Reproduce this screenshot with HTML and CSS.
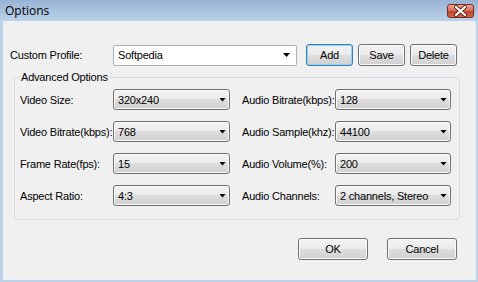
FILE: index.html
```html
<!DOCTYPE html>
<html lang="en">
<head>
  <meta charset="UTF-8">
  <title>Options</title>
  <link rel="stylesheet" href="styles.css">
</head>
<body>
  <div class="window">
    <div class="titlebar">
      <span class="title">Options</span>
      <span class="close">
        <svg width="25" height="12" viewBox="0 0 25 12">
          <path d="M8 2 L17 10 M17 2 L8 10" stroke="#6b2418" stroke-width="4" stroke-linecap="round"/>
          <path d="M8 2 L17 10 M17 2 L8 10" stroke="#fff" stroke-width="2.2" stroke-linecap="round"/>
        </svg>
      </span>
    </div>
    <div class="client">
      <div class="profile-row">
        <span class="profile-label">Custom Profile:</span>
        <div class="edit-combo"><span>Softpedia</span></div>
        <button class="btn btn-default">Add</button>
        <button class="btn">Save</button>
        <button class="btn">Delete</button>
      </div>
      <fieldset class="group">
        <legend>Advanced Options</legend>
        <div class="grid">
          <span>Video Size:</span>
          <div class="combo">320x240</div>
          <span class="label-right">Audio Bitrate(kbps):</span>
          <div class="combo">128</div>

          <span>Video Bitrate(kbps):</span>
          <div class="combo">768</div>
          <span class="label-right">Audio Sample(khz):</span>
          <div class="combo">44100</div>

          <span>Frame Rate(fps):</span>
          <div class="combo">15</div>
          <span class="label-right">Audio Volume(%):</span>
          <div class="combo">200</div>

          <span>Aspect Ratio:</span>
          <div class="combo">4:3</div>
          <span class="label-right">Audio Channels:</span>
          <div class="combo">2 channels, Stereo</div>
        </div>
      </fieldset>
      <div class="actions">
        <button class="btn btn-wide">OK</button>
        <button class="btn btn-wide">Cancel</button>
      </div>
    </div>
  </div>
</body>
</html>
```

FILE: styles.css
```css
* {
  box-sizing: border-box;
}
body {
  margin: 0;
  font-family: "Liberation Sans", Arial, sans-serif;
  font-size: 11px;
  letter-spacing: -0.2px;
  color: #000;
}
.window {
  width: 478px;
  height: 282px;
  background: #f0f0f0;
}
.titlebar {
  height: 21px;
  display: flex;
  align-items: center;
  justify-content: space-between;
  padding: 0 4px 0 5px;
  background: linear-gradient(#98b3d3, #bbd2ea);
}
.title {
  font-family: "Open Sans", sans-serif;
  font-size: 12px;
  letter-spacing: 0;
}
.close {
  width: 27px;
  height: 14px;
  display: flex;
  align-items: center;
  justify-content: center;
  border: 1px solid #7e2a1e;
  border-radius: 3px;
  background: linear-gradient(#e9a897, #d37361 45%, #c0432d 55%, #cf6a50);
}
.client {
  height: 261px;
  border: solid #bbd2ea;
  border-width: 0 2px 2px 3px;
  padding: 23px 0 0 7px;
}
.profile-row {
  display: flex;
  align-items: center;
  height: 22px;
}
.profile-label {
  width: 103px;
}
.edit-combo {
  width: 184px;
  height: 21px;
  display: flex;
  align-items: center;
  padding: 0 6px 0 4px;
  background: #fff;
  border: 1px solid #a9afb8;
  border-radius: 2px;
}
.edit-combo::after,
.combo::after {
  content: "";
  width: 7px;
  height: 4px;
  margin-left: auto;
  background: #000;
  clip-path: polygon(0 0, 100% 0, 50% 100%);
}
.btn {
  width: 47px;
  height: 22px;
  margin-left: 5px;
  padding: 0;
  font: inherit;
  letter-spacing: inherit;
  color: #000;
  border: 1px solid #707070;
  border-radius: 3px;
  background: linear-gradient(#f3f3f3, #ebebeb 50%, #dedede 50%, #d0d0d0);
  box-shadow: inset 0 0 0 1px #fbfbfb;
}
.btn-default {
  margin-left: 9px;
  border-color: #3c7fb1;
  box-shadow: inset 0 0 0 1px #8fd2f6;
}
.group {
  margin: 5px 0 0 4px;
  width: 446px;
  min-inline-size: 0;
  padding: 5px 8px 13px 5px;
  border: 1px solid #d5dfe5;
  border-radius: 3px;
}
.group legend {
  padding: 0 1px;
  line-height: 13px;
}
.grid {
  display: grid;
  grid-template-columns: 93px 117px 105px 116px;
  grid-auto-rows: 21px;
  row-gap: 11px;
  align-items: center;
  white-space: nowrap;
}
.label-right {
  padding-left: 12px;
}
.combo {
  height: 21px;
  display: flex;
  align-items: center;
  padding: 0 3px 0 4px;
  border: 1px solid #707070;
  border-radius: 3px;
  background: linear-gradient(#f3f3f3, #ebebeb 50%, #dedede 50%, #d0d0d0);
  box-shadow: inset 0 0 0 1px #fbfbfb;
}
.actions {
  display: flex;
  justify-content: flex-end;
  gap: 19px;
  margin-top: 18px;
  padding-right: 19px;
}
.btn-wide {
  width: 70px;
  margin-left: 0;
}
```
